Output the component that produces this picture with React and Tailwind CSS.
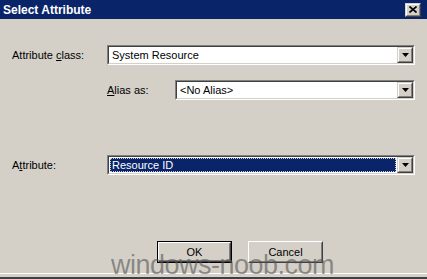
const font = { fontFamily: '"Liberation Sans", Arial, sans-serif' }

function Arrow() {
  return (
    <svg width="7" height="4" viewBox="0 0 7 4" className="block">
      <polygon points="0,0 7,0 3.5,4" fill="#000" />
    </svg>
  )
}

function Raised({ className = '', children }) {
  return (
    <div
      className={`border border-t-[#d4d0c8] border-l-[#d4d0c8] border-r-[#404040] border-b-[#404040] bg-[#d4d0c8] ${className}`}
    >
      <div className="flex h-full w-full items-center justify-center border border-t-white border-l-white border-r-[#808080] border-b-[#808080]">
        {children}
      </div>
    </div>
  )
}

function Combo({ value, selected = false, className = '' }) {
  return (
    <div
      className={`h-[20px] border border-t-[#808080] border-l-[#808080] border-r-white border-b-white ${className}`}
    >
      <div className="flex h-full border border-t-[#404040] border-l-[#404040] border-r-[#d4d0c8] border-b-[#d4d0c8] bg-white">
        <div className="flex min-w-0 flex-1 items-center p-px">
          {selected ? (
            <div className="flex h-full w-full items-center border border-dotted border-[#c8c8c8] bg-[#0a246a] pl-px text-white">
              {value}
            </div>
          ) : (
            <div className="pl-[2px] text-black">{value}</div>
          )}
        </div>
        <Raised className="h-[16px] w-[16px]">
          <Arrow />
        </Raised>
      </div>
    </div>
  )
}

function Button({ label, isDefault = false }) {
  const inner = (
    <div className="flex h-full w-full items-center justify-center border border-t-white border-l-white border-r-[#404040] border-b-[#404040] bg-[#d4d0c8]">
      <div className="flex h-full w-full items-center justify-center border border-t-[#d4d0c8] border-l-[#d4d0c8] border-r-[#808080] border-b-[#808080]">
        {label}
      </div>
    </div>
  )

  if (isDefault) {
    return <div className="h-[22px] w-[75px] border border-black">{inner}</div>
  }

  return <div className="h-[22px] w-[75px]">{inner}</div>
}

export default function App() {
  return (
    <div
      className="relative flex h-[279px] w-[427px] flex-col overflow-hidden bg-[#d4d0c8] text-[11px] text-black"
      style={font}
    >
      <header className="flex h-[19px] items-center justify-between bg-[#0a246a] pl-[3px] pr-[6px]">
        <span className="text-[12px] font-bold leading-none text-white">Select Attribute</span>
        <Raised className="h-[14px] w-[16px]">
          <svg width="8" height="7" viewBox="0 0 8 7" className="block">
            <path d="M0.5 0.5 L7.5 6.5 M7.5 0.5 L0.5 6.5" stroke="#000" strokeWidth="1.6" />
          </svg>
        </Raised>
      </header>

      <div className="flex flex-1 flex-col pl-[12px] pr-[12px] pt-[26px]">
        <div className="flex items-center">
          <span className="w-[95px]">
            Attribute <span className="underline underline-offset-1">c</span>lass:
          </span>
          <Combo value="System Resource" className="flex-1" />
        </div>

        <div className="mt-[15px] flex items-center pl-[95px]">
          <span className="w-[68px]">
            <span className="underline underline-offset-1">A</span>lias as:
          </span>
          <Combo value="<No Alias>" className="flex-1" />
        </div>

        <div className="mt-[55px] flex items-center">
          <span className="w-[95px]">
            A<span className="underline underline-offset-1">t</span>tribute:
          </span>
          <Combo value="Resource ID" selected className="flex-1" />
        </div>

        <div className="mt-[66px] flex gap-[16px] pl-[145px]">
          <Button label="OK" isDefault />
          <Button label="Cancel" />
        </div>
      </div>

      <div className="h-px bg-white" />
      <div className="h-[3px]" />
      <div className="h-[2px] bg-[#404040]" />

      <div
        className="pointer-events-none absolute bottom-0 left-[111px] text-[27px] leading-none tracking-[-0.5px] text-[#555555]/60"
        style={font}
      >
        windows-noob.com
      </div>
    </div>
  )
}
